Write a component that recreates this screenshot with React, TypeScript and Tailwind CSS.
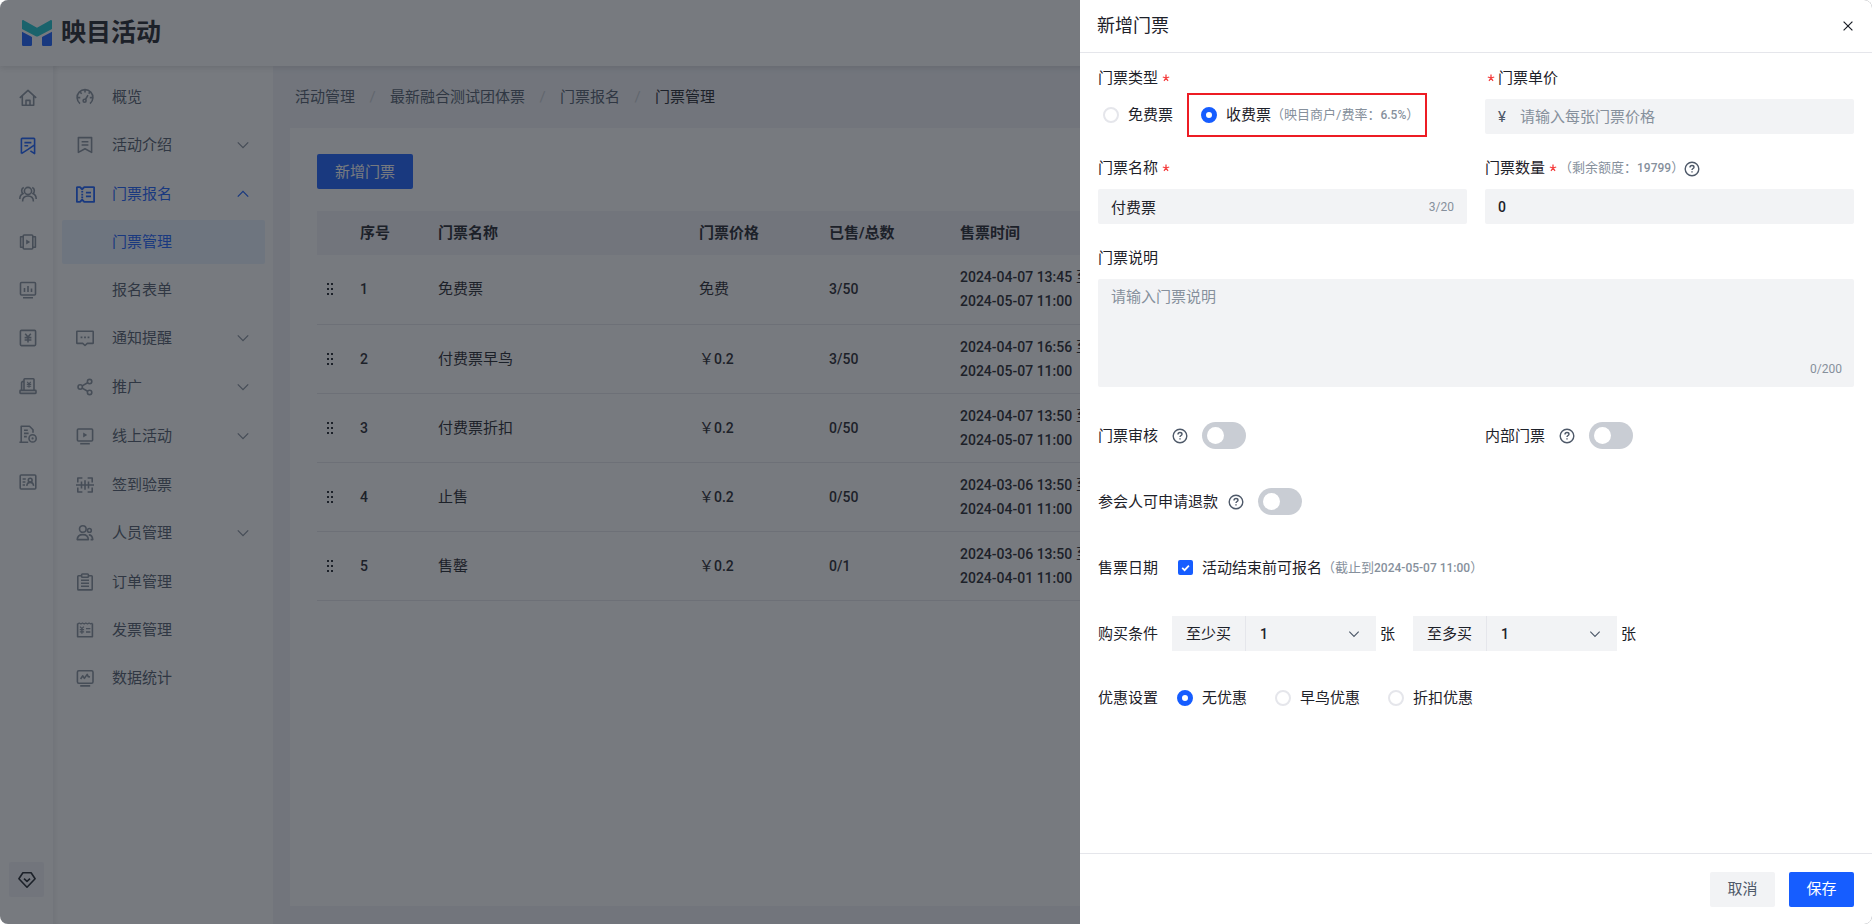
/**
 * Ticket management page with the "new ticket" drawer opened on top
 */

import React, { useState } from 'react';

type IconProps = { className?: string };

/* ---------- Icons ---------- */

function Svg({ className = 'size-[18px]', children }: { className?: string; children: React.ReactNode }) {
    return (
        <svg
            viewBox="0 0 18 18"
            className={`shrink-0 ${className}`}
            fill="none"
            stroke="currentColor"
            strokeWidth="1.6"
            strokeLinejoin="round"
            aria-hidden="true"
        >
            {children}
        </svg>
    );
}

const HomeIcon = () => (
    <Svg>
        <path d="M.8 8.9 9 1.3l8.2 7.6M3.3 7v9.2h11.4V7M7 16v-4.6h4V16" />
    </Svg>
);

const ActivityIcon = () => (
    <Svg>
        <path d="M2.4 16.6V2.1c0-.4.3-.7.7-.7h11.8c.4 0 .7.3.7.7v14.5l-4.2-2.8M2.4 16.6 9 12.4l6.6-4.6M5.4 5.6h7M5.4 8.8h3.8" />
    </Svg>
);

const GroupIcon = () => (
    <Svg>
        <circle cx="9" cy="6" r="3.6" />
        <path d="M3.6 16.4c0-3.4 2-5.4 5.4-5.4s5.4 2 5.4 5.4M4.8 2.6a3.4 3.4 0 0 0-.6 6C2 9.4.8 11.2.8 14M13.2 2.6a3.4 3.4 0 0 1 .6 6c2.2.8 3.4 2.6 3.4 5.4" />
    </Svg>
);

const CarouselIcon = () => (
    <Svg>
        <rect x="4.2" y="2" width="9.6" height="14" rx="1" />
        <path d="M4 3.8H1.6v10.4H4M14 3.8h2.4v10.4H14" />
        <path d="M7.2 6.6v4.8L11.2 9z" fill="currentColor" stroke="none" />
    </Svg>
);

const BoardIcon = () => (
    <Svg>
        <rect x="1.5" y="1.5" width="15" height="12.5" rx="1" />
        <path d="M5.5 11V7M9 11V5M12.5 11V7.5M4 16.8h10" />
    </Svg>
);

const YuanBoxIcon = () => (
    <Svg>
        <rect x="1.4" y="1.4" width="15.2" height="15.2" rx="1" />
        <path d="M6.2 4.8 9 8l2.8-3.2M9 8v5.5M5.6 8.6h6.8M5.6 11h6.8" />
    </Svg>
);

const LaptopYuanIcon = () => (
    <Svg>
        <path d="M5 13V2.4c0-.4.3-.7.7-.7h8.6c.4 0 .7.3.7.7V13M5 4.6H3.2l-.6 1V13" />
        <rect x="1" y="13.4" width="16" height="3" rx=".6" />
        <path d="m8.2 4.8 1.8 2 1.8-2M10 6.8v4M7.8 7.4h4.4M7.8 9.2h4.4" strokeWidth="1.1" />
    </Svg>
);

const DocTargetIcon = () => (
    <Svg>
        <path d="M.4 17.2h8.8M2.2 17V1.3h8.3L14 4.8v3M5 5.2h3.8M5 8.4h4.6M5 11.6h2.8" />
        <circle cx="13.6" cy="13.4" r="3.6" />
        <circle cx="13.6" cy="13.4" r="1.1" fill="currentColor" stroke="none" />
    </Svg>
);

const IdCardIcon = () => (
    <Svg>
        <rect x="1.2" y="2" width="15.6" height="14" rx="1" />
        <circle cx="11.2" cy="7.2" r="1.9" />
        <path d="M7.8 12.9c.2-2.2 1.4-3.5 3.4-3.5s3.2 1.3 3.4 3.5M3.6 6h3.2M3.6 9h2.8M3.6 12h2.4" />
    </Svg>
);

const DiamondIcon = () => (
    <Svg>
        <path d="M4.9 1.8h8.2l4 6L9 16.2.9 7.8z" />
        <path d="m6 7.6 3 2.8 3-2.8" />
    </Svg>
);

const GaugeIcon = () => (
    <Svg>
        <path d="M4 15.6a7.9 7.9 0 1 1 10 0" />
        <circle cx="8.6" cy="12.8" r="1.5" />
        <path d="m9.4 11.5 2.6-4.3M9 2v2.4M4.2 4.3l1.5 1.5M2 9.6h2.3M13.9 4.3l-1.3 1.3M13.8 9.6H16" />
    </Svg>
);

const BookmarkIcon = () => (
    <Svg>
        <path d="M2.4 16.4V1.6h13.2v14.8L9 12.8zM5.6 5.8h6.8M5.6 9h6.8" />
    </Svg>
);

const TicketIcon = () => (
    <Svg className="size-[19px]">
        <path
            d="M1.5 2h2.3l2 2 2-2h8.7c.4 0 .7.3.7.7v12.6c0 .4-.3.7-.7.7H7.800l-2-2-2 2H1.500c-.4 0-.7-.3-.7-.7V2.700c0-.4.3-.7.7-.7zM5.900 5.600v1.600M5.900 8.300v1.600M5.900 11v1.600M9.400 7.200h4.800M9.400 10.800h4.800"
            strokeWidth="1.8"
        />
    </Svg>
);

const MessageIcon = () => (
    <Svg>
        <path d="M1.3 2.3h15.4c.3 0 .5.2.5.5v11.1c0 .3-.2.5-.5.5h-5.4L9 16.5l-2.3-2.1H1.3c-.3 0-.5-.2-.5-.5V2.8c0-.3.2-.5.5-.5z" />
        <path d="M4.6 8.4h1.8M8.1 8.4h1.8M11.6 8.4h1.8" />
    </Svg>
);

const ShareIcon = () => (
    <Svg>
        <circle cx="4.2" cy="9" r="2.2" />
        <circle cx="13.6" cy="3.6" r="2.2" />
        <circle cx="13.6" cy="14.4" r="2.2" />
        <path d="m6.2 7.9 5.4-3.2M6.2 10.1l5.4 3.2" />
    </Svg>
);

const OnlineIcon = () => (
    <Svg>
        <rect x="1.4" y="2" width="15.2" height="12" rx="1" />
        <path d="M4.2 16.7h9.6" />
        <path d="M7.2 5.6v4.8L11.2 8z" fill="currentColor" stroke="none" />
    </Svg>
);

const ScanIcon = () => (
    <Svg>
        <path d="M1.8 6.4V2h4.6M11.6 2h4.6v4.4M16.2 11.6V16h-4.6M6.4 16H1.8v-4.4" />
        <path d="M0 9h18M5.5 5.4v7.2M9 4.2v9.6M12.5 5.4v7.2" />
    </Svg>
);

const UsersIcon = () => (
    <Svg>
        <circle cx="6.8" cy="5" r="3.3" />
        <circle cx="13.4" cy="6.4" r="1.9" />
        <path d="M1.2 15.6c.2-3.2 2.2-5 5.6-5s5.4 1.8 5.6 5zM12.8 10.9c2.3 0 3.6 1.7 4 4.7h-2.2" />
    </Svg>
);

const ClipboardIcon = () => (
    <Svg>
        <path d="M5.6 2.7H2.500c-.4 0-.7.3-.7.7v12.800c0 .4.3.7.7.7h13c.4 0 .7-.3.7-.7V3.400c0-.4-.3-.7-.7-.7h-3.100" />
        <rect x="5.6" y="1" width="6.8" height="3.2" rx=".8" />
        <path d="M5 7.2h8M5 10.2h8M5 13.2h8" />
    </Svg>
);

const InvoiceIcon = () => (
    <Svg>
        <path d="M1.6 2.4v13.4h14.8V2.4" />
        <path d="m1.6 3 1.6-1 1.7 1 1.6-1 1.7 1 1.6-1 1.7 1 1.6-1 1.7 1 1.6-1" strokeWidth="1.2" />
        <path d="m4 5.6 1.9 2 1.9-2M5.9 7.6v5.2M3.7 8.6h4.4M3.7 10.8h4.4M10 7.6h4.4M10 11h4.4" strokeWidth="1.3" />
    </Svg>
);

const StatsIcon = () => (
    <Svg>
        <rect x="1.4" y="1.8" width="15.6" height="12.4" rx="1.4" />
        <path d="m4.6 10 2.2-3.2 1.6 2.6 2.8-4 1 2.2 1.8.4M4.2 16.9h10" />
    </Svg>
);

function Chevron({ up, className = '' }: IconProps & { up?: boolean }) {
    return (
        <svg viewBox="0 0 12 12" className={`size-3 shrink-0 ${className}`} fill="none" stroke="currentColor" strokeWidth="1.3" aria-hidden="true">
            <path d={up ? 'M.8 8.6 6 3.4l5.2 5.2' : 'M.8 3.4 6 8.6l5.2-5.2'} />
        </svg>
    );
}

function HelpIcon({ className = '' }: IconProps) {
    return (
        <svg viewBox="0 0 16 16" className={`size-4 shrink-0 text-[#4e5969] ${className}`} fill="none" stroke="currentColor" strokeWidth="1.4" aria-hidden="true">
            <circle cx="8" cy="8" r="6.8" />
            <path d="M6 6.4c0-1.2.8-1.9 2-1.9s2 .7 2 1.7c0 1.3-2 1.4-2 2.9" />
            <path d="M8 10.2v1.4" />
        </svg>
    );
}

function Required() {
    return (
        <svg viewBox="0 0 8 8" className="size-2 shrink-0 text-[#f53f3f]" fill="none" stroke="currentColor" strokeWidth="1.3" aria-hidden="true">
            <path d="M4 4V.6M4 4 .8 3M4 4l3.2-1M4 4 2 6.9M4 4l2 2.9" />
        </svg>
    );
}

function Logo() {
    return (
        <svg viewBox="0 0 30 26" className="h-[26px] w-[30px]" aria-hidden="true">
            <path d="M0 1.2C0 .4.8-.2 1.6.2L15 7.8 28.4.2c.8-.4 1.6.2 1.6 1V9l-13.8 7.2c-.8.4-1.6.4-2.4 0L0 9z" fill="#18c5d0" />
            <path d="M0 11.8 10 17v7.4c0 .9-.7 1.6-1.6 1.6H1.6C.7 26 0 25.3 0 24.4zM30 11.8 20 17v7.4c0 .9.7 1.6 1.6 1.6h6.8c.9 0 1.6-.7 1.6-1.6z" fill="#165dff" />
        </svg>
    );
}

/* ---------- Data ---------- */

const railItems = [
    { icon: HomeIcon, active: false },
    { icon: ActivityIcon, active: true },
    { icon: GroupIcon, active: false },
    { icon: CarouselIcon, active: false },
    { icon: BoardIcon, active: false },
    { icon: YuanBoxIcon, active: false },
    { icon: LaptopYuanIcon, active: false },
    { icon: DocTargetIcon, active: false },
    { icon: IdCardIcon, active: false },
];

type MenuItem = {
    label: string;
    icon: () => React.ReactElement;
    expandable?: boolean;
    children?: { label: string; active?: boolean }[];
};

const menu: MenuItem[] = [
    { label: '概览', icon: GaugeIcon },
    { label: '活动介绍', icon: BookmarkIcon, expandable: true },
    {
        label: '门票报名',
        icon: TicketIcon,
        expandable: true,
        children: [{ label: '门票管理', active: true }, { label: '报名表单' }],
    },
    { label: '通知提醒', icon: MessageIcon, expandable: true },
    { label: '推广', icon: ShareIcon, expandable: true },
    { label: '线上活动', icon: OnlineIcon, expandable: true },
    { label: '签到验票', icon: ScanIcon },
    { label: '人员管理', icon: UsersIcon, expandable: true },
    { label: '订单管理', icon: ClipboardIcon },
    { label: '发票管理', icon: InvoiceIcon },
    { label: '数据统计', icon: StatsIcon },
];

const crumbs = ['活动管理', '最新融合测试团体票', '门票报名', '门票管理'];

const tickets = [
    { id: 1, name: '免费票', price: null, sold: '3/50', from: '2024-04-07 13:45', to: '2024-05-07 11:00' },
    { id: 2, name: '付费票早鸟', price: '0.2', sold: '3/50', from: '2024-04-07 16:56', to: '2024-05-07 11:00' },
    { id: 3, name: '付费票折扣', price: '0.2', sold: '0/50', from: '2024-04-07 13:50', to: '2024-05-07 11:00' },
    { id: 4, name: '止售', price: '0.2', sold: '0/50', from: '2024-03-06 13:50', to: '2024-04-01 11:00' },
    { id: 5, name: '售罄', price: '0.2', sold: '0/1', from: '2024-03-06 13:50', to: '2024-04-01 11:00' },
];

/* ---------- Page ---------- */

function Sidebar() {
    return (
        <>
            <nav className="flex w-[54px] shrink-0 flex-col items-center border-r border-[#f2f3f5] bg-white pt-2">
                {railItems.map(({ icon: Icon, active }, index) => (
                    <a
                        key={index}
                        href="#"
                        className={`flex h-12 w-full items-center justify-center pl-[3px] ${active ? 'text-[#165dff]' : 'text-[#86909c]'}`}
                    >
                        <Icon />
                    </a>
                ))}
                <button className="mt-auto mb-[27px] flex size-[35px] items-center justify-center rounded-xs bg-[#f2f3f8] text-[#1d2129]">
                    <DiamondIcon />
                </button>
            </nav>
            <nav className="w-[219px] shrink-0 bg-white px-2 pt-[7px] shadow-[inset_4px_0_4px_-2px_rgba(0,0,0,0.06)]">
                {menu.map(({ label, icon: Icon, expandable, children }) => (
                    <div key={label} className={expandable && !children ? 'mb-px' : ''}>
                        <a
                            href="#"
                            className={`flex h-12 items-center pr-4 pl-[14px] ${children ? 'text-[#165dff]' : 'text-[#4e5969]'}`}
                        >
                            <span className={`flex w-[18px] justify-center ${children ? '' : 'text-[#86909c]'}`}>
                                <Icon />
                            </span>
                            <span className="ml-[18px] flex-1">{label}</span>
                            {expandable && <Chevron up={!!children} className={children ? '' : 'text-[#86909c]'} />}
                        </a>
                        {children && (
                            <div className="flex flex-col gap-1 py-0.5">
                                {children.map((child) => (
                                    <a
                                        key={child.label}
                                        href="#"
                                        className={`flex h-11 items-center rounded-xs pl-[50px] ${
                                            child.active ? 'bg-[#e8f3ff] text-[#165dff]' : 'text-[#4e5969]'
                                        }`}
                                    >
                                        {child.label}
                                    </a>
                                ))}
                            </div>
                        )}
                    </div>
                ))}
            </nav>
        </>
    );
}

function TicketTable() {
    return (
        <table className="w-full table-fixed border-collapse text-left">
            <colgroup>
                <col className="w-[26px]" />
                <col className="w-[78px]" />
                <col className="w-[261px]" />
                <col className="w-[130px]" />
                <col className="w-[131px]" />
                <col />
            </colgroup>
            <thead>
                <tr className="h-11 bg-[#f2f3f8]">
                    <th />
                    <th className="pl-[17px] font-bold">序号</th>
                    <th className="pl-[17px] font-bold">门票名称</th>
                    <th className="pl-[17px] font-bold">门票价格</th>
                    <th className="pl-[17px] font-bold">已售/总数</th>
                    <th className="pl-[17px] font-bold">售票时间</th>
                </tr>
            </thead>
            <tbody>
                {tickets.map((ticket) => (
                    <tr key={ticket.id} className="h-[69px] border-b border-[#e5e6eb]">
                        <td>
                            <svg viewBox="0 0 8 14" className="mx-auto h-[14px] w-2" fill="#1d2129" aria-hidden="true">
                                <path d="M1 1h2v2H1zM5 1h2v2H5zM1 6h2v2H1zM5 6h2v2H5zM1 11h2v2H1zM5 11h2v2H5z" />
                            </svg>
                        </td>
                        <td className="pl-[17px] text-sm font-medium">{ticket.id}</td>
                        <td className="pl-[17px]">{ticket.name}</td>
                        <td className="pl-[17px]">
                            {ticket.price ? (
                                <>
                                    ￥<span className="text-sm font-medium">{ticket.price}</span>
                                </>
                            ) : (
                                '免费'
                            )}
                        </td>
                        <td className="pl-[17px] text-sm font-medium">{ticket.sold}</td>
                        <td className="pl-[17px] leading-6">
                            <span className="text-sm leading-6 font-medium">{ticket.from}</span> 至
                            <br />
                            <span className="text-sm leading-6 font-medium">{ticket.to}</span>
                        </td>
                    </tr>
                ))}
            </tbody>
        </table>
    );
}

/* ---------- Drawer form ---------- */

const radioClass =
    'size-4 shrink-0 appearance-none rounded-full border-2 border-[#e5e6eb] bg-white checked:border-[5px] checked:border-[#165dff]';
const fieldClass = 'h-[35px] w-full rounded-xs bg-[#f2f3f5] px-[13px] outline-none placeholder:text-[#86909c]';

function Switch({ id }: { id: string }) {
    return (
        <input
            id={id}
            type="checkbox"
            role="switch"
            className="relative h-[27px] w-11 shrink-0 appearance-none rounded-full bg-[#c9cdd4] before:absolute before:top-[5px] before:left-[5px] before:size-[17px] before:rounded-full before:bg-white checked:bg-[#165dff] checked:before:left-[22px]"
        />
    );
}

function CountSelect({ id, label }: { id: string; label: string }) {
    return (
        <div className="flex items-center">
            <label htmlFor={id} className="flex h-[35px] w-[74px] items-center justify-center border-r border-[#e5e6eb] bg-[#f2f3f5]">
                {label}
            </label>
            <div className="relative">
                <select id={id} className="h-[35px] w-[130px] appearance-none bg-[#f2f3f5] px-[14px] text-sm font-medium outline-none">
                    <option>1</option>
                </select>
                <Chevron className="pointer-events-none absolute top-3 right-4 scale-90 text-[#4e5969]" />
            </div>
            <span className="ml-1">张</span>
        </div>
    );
}

function TicketDrawer() {
    const [name, setName] = useState('付费票');
    const [desc, setDesc] = useState('');

    return (
        <aside className="absolute inset-y-0 right-0 flex w-[792px] max-w-full flex-col bg-white">
            <header className="flex h-[53px] shrink-0 items-center justify-between border-b border-[#e5e6eb] pr-[18px] pl-[17px]">
                <h2 className="text-lg">新增门票</h2>
                <button aria-label="关闭" className="p-px">
                    <svg viewBox="0 0 10 10" className="size-[10px]" stroke="#1d2129" strokeWidth="1.2" aria-hidden="true">
                        <path d="m.6.6 8.800 8.800M9.400.6.6 9.400" />
                    </svg>
                </button>
            </header>

            <form className="flex-1 overflow-auto px-[18px] pt-[13px]">
                <div className="grid grid-cols-2 gap-x-[18px] gap-y-[22px]">
                    <div role="radiogroup" aria-labelledby="type-label">
                        <div id="type-label" className="flex h-6 items-center gap-1">
                            门票类型
                            <Required />
                        </div>
                        <div className="mt-[7px] flex h-[35px] items-center gap-7 pl-[5px]">
                            <label className="flex h-6 items-center gap-[9px]">
                                <input type="radio" name="type" className={radioClass} />
                                免费票
                            </label>
                            <label className="relative flex h-6 items-center">
                                <input type="radio" name="type" defaultChecked className={`mr-[9px] ${radioClass}`} />
                                收费票
                                <span className="text-[13px] text-[#86909c]">
                                    （映目商户/费率：<span className="text-xs font-medium">6.5%</span>）
                                </span>
                                <span className="pointer-events-none absolute -inset-y-[10px] -right-2 -left-[14px] border-2 border-[#ed1c24]" />
                            </label>
                        </div>
                    </div>

                    <div>
                        <label htmlFor="price" className="flex h-6 items-center gap-[3px] pl-[2px]">
                            <Required />
                            门票单价
                        </label>
                        <div className="mt-[9px] flex h-[35px] items-center rounded-xs bg-[#f2f3f5] px-[13px]">
                            <span className="text-[#4e5969]">¥</span>
                            <input
                                id="price"
                                placeholder="请输入每张门票价格"
                                className="ml-[14px] h-full min-w-0 flex-1 bg-transparent outline-none placeholder:text-[#86909c]"
                            />
                        </div>
                    </div>

                    <div>
                        <label htmlFor="name" className="flex h-6 items-center gap-1">
                            门票名称
                            <Required />
                        </label>
                        <div className="mt-[9px] flex h-[35px] items-center rounded-xs bg-[#f2f3f5] px-[13px]">
                            <input
                                id="name"
                                value={name}
                                maxLength={20}
                                onChange={(e) => setName(e.target.value)}
                                className="h-full min-w-0 flex-1 bg-transparent outline-none"
                            />
                            <span className="text-xs text-[#86909c]">{name.length}/20</span>
                        </div>
                    </div>

                    <div>
                        <div className="flex h-6 items-center">
                            <label htmlFor="amount" className="flex items-center gap-1">
                                门票数量
                                <Required />
                            </label>
                            <span className="ml-0.5 text-[13px] text-[#86909c]">
                                （剩余额度：<span className="text-xs font-medium">19799</span>）
                            </span>
                            <HelpIcon className="mt-0.5" />
                        </div>
                        <input id="amount" defaultValue="0" className={`mt-[9px] block text-sm font-medium ${fieldClass}`} />
                    </div>

                    <div className="col-span-2">
                        <label htmlFor="desc" className="flex h-6 items-center">
                            门票说明
                        </label>
                        <div className="relative mt-[9px]">
                            <textarea
                                id="desc"
                                placeholder="请输入门票说明"
                                value={desc}
                                maxLength={200}
                                onChange={(e) => setDesc(e.target.value)}
                                className="block h-[108px] w-full resize-none rounded-xs bg-[#f2f3f5] px-[13px] py-1.5 leading-6 outline-none placeholder:text-[#86909c]"
                            />
                            <span className="absolute right-3 bottom-2 text-xs leading-5 text-[#86909c]">{desc.length}/200</span>
                        </div>
                    </div>
                </div>

                <div className="mt-[31px] flex flex-col gap-[31px]">
                    <div className="grid h-[35px] grid-cols-2 items-center gap-x-[18px]">
                        <div className="flex items-center gap-[14px]">
                            <label htmlFor="audit">门票审核</label>
                            <HelpIcon />
                            <Switch id="audit" />
                        </div>
                        <div className="flex items-center gap-[14px]">
                            <label htmlFor="internal">内部门票</label>
                            <HelpIcon />
                            <Switch id="internal" />
                        </div>
                    </div>

                    <div className="flex h-[35px] items-center">
                        <label htmlFor="refund" className="mr-[10px]">
                            参会人可申请退款
                        </label>
                        <HelpIcon className="mr-[14px]" />
                        <Switch id="refund" />
                    </div>

                    <div className="flex h-[35px] items-center">
                        <span className="w-[74px]">售票日期</span>
                        <label className="flex items-center pl-1.5">
                            <span className="relative mr-[9px] flex">
                                <input
                                    type="checkbox"
                                    defaultChecked
                                    className="peer size-[15px] appearance-none rounded-xs border-2 border-[#e5e6eb] checked:border-[#165dff] checked:bg-[#165dff]"
                                />
                                <svg viewBox="0 0 15 15" className="pointer-events-none absolute inset-0 hidden size-[15px] peer-checked:block" fill="none" stroke="#fff" strokeWidth="1.7" aria-hidden="true">
                                    <path d="m4.2 7.9 2.4 2.3 4.3-4.6" />
                                </svg>
                            </span>
                            活动结束前可报名
                            <span className="text-[13px] text-[#86909c]">
                                （截止到<span className="text-xs font-medium">2024-05-07 11:00</span>）
                            </span>
                        </label>
                    </div>

                    <div className="flex h-[35px] items-center">
                        <span className="w-[74px]">购买条件</span>
                        <div className="flex items-center gap-[18px]">
                            <CountSelect id="min" label="至少买" />
                            <CountSelect id="max" label="至多买" />
                        </div>
                    </div>

                    <div role="radiogroup" aria-labelledby="discount-label" className="flex h-8 items-center">
                        <span id="discount-label" className="w-[74px]">
                            优惠设置
                        </span>
                        <div className="flex items-center gap-7 pl-[5px]">
                            {['无优惠', '早鸟优惠', '折扣优惠'].map((label, index) => (
                                <label key={label} className="flex items-center gap-[9px]">
                                    <input type="radio" name="discount" defaultChecked={index === 0} className={radioClass} />
                                    {label}
                                </label>
                            ))}
                        </div>
                    </div>
                </div>
            </form>

            <footer className="flex h-[71px] shrink-0 items-center justify-end gap-[14px] border-t border-[#e5e6eb] px-[18px]">
                <button className="h-[35px] min-w-[65px] rounded-xs bg-[#f2f3f5] px-4 text-[#4e5969]">取消</button>
                <button className="h-[35px] min-w-[65px] rounded-xs bg-[#165dff] px-4 text-white">保存</button>
            </footer>
        </aside>
    );
}

export default function App() {
    return (
        <div className="relative flex h-screen flex-col overflow-hidden rounded-lg bg-[#f2f3f8] font-[Roboto,'Noto_Sans_CJK_SC',sans-serif] text-[15px] leading-6 text-[#1d2129]">
            <header className="relative z-10 flex h-[66px] shrink-0 items-center bg-white pl-[22px] shadow-[0_2px_6px_rgba(0,0,0,0.12)]">
                <Logo />
                <h1 className="ml-[9px] text-[25px] leading-8 font-bold">映目活动</h1>
            </header>

            <div className="flex min-h-0 flex-1">
                <Sidebar />
                <main className="flex min-w-0 flex-1 flex-col pr-[18px] pb-[18px] pl-[17px]">
                    <nav className="flex h-[62px] shrink-0 items-center pl-[5px]">
                        {crumbs.map((crumb, index) => (
                            <React.Fragment key={crumb}>
                                {index > 0 && <span className="w-[35px] text-center text-[#c9cdd4]">/</span>}
                                <a href="#" className={index === crumbs.length - 1 ? 'text-[#1d2129]' : 'text-[#4e5969]'}>
                                    {crumb}
                                </a>
                            </React.Fragment>
                        ))}
                    </nav>
                    <section className="flex-1 bg-white px-[27px] pt-[26px]">
                        <button className="mb-[22px] block h-[35px] rounded-xs bg-[#165dff] px-[18px] text-white">新增门票</button>
                        <TicketTable />
                    </section>
                </main>
            </div>

            <div className="absolute inset-0 z-20">
                <div className="absolute inset-0 bg-[#1d2129]/60" />
                <TicketDrawer />
            </div>
        </div>
    );
}
